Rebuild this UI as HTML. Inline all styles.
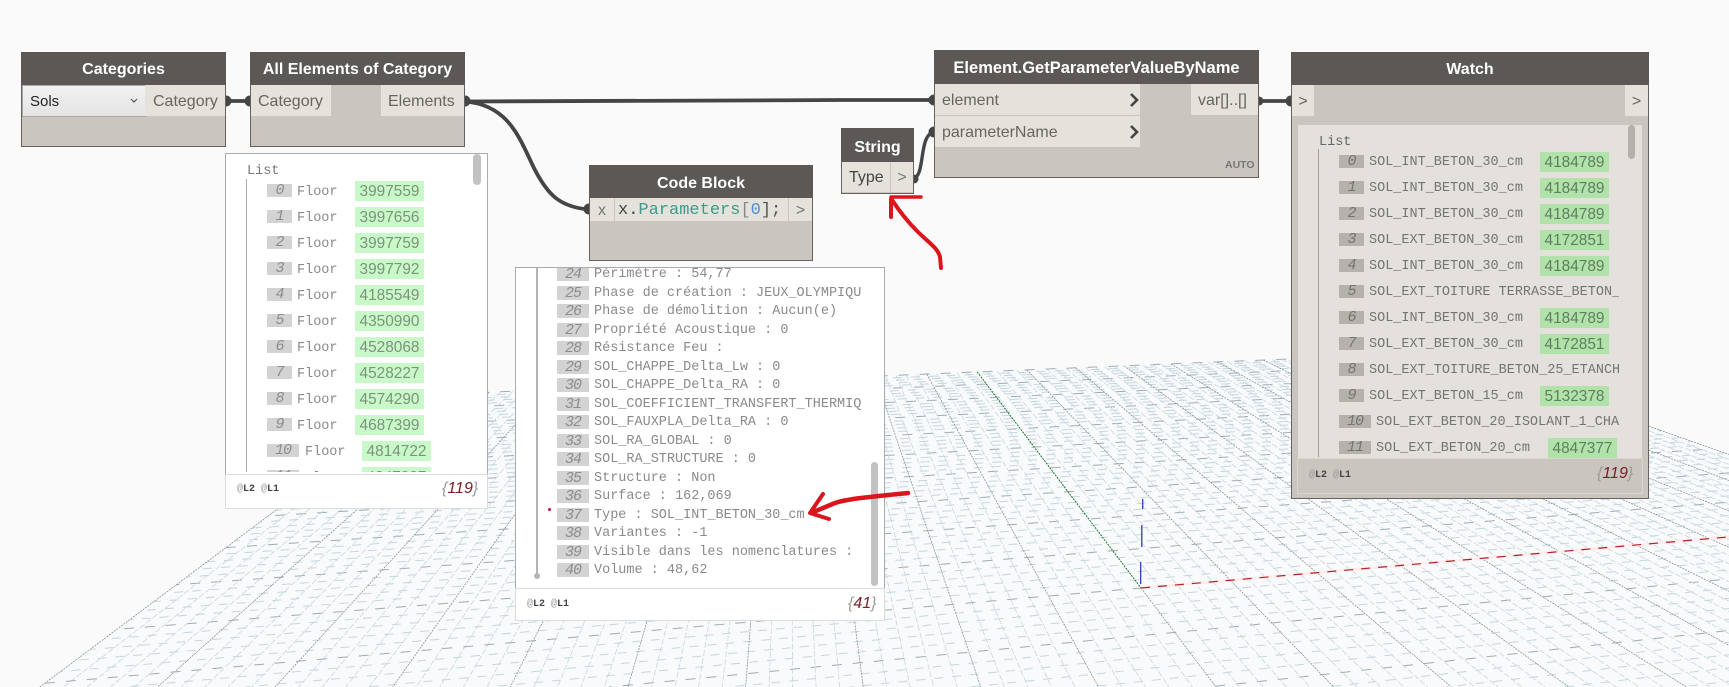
<!DOCTYPE html>
<html><head><meta charset="utf-8"><title>Dynamo</title>
<style>
html,body{margin:0;padding:0;width:1729px;height:687px;overflow:hidden}
body{background:#fafafa;position:relative;font-family:"Liberation Sans",sans-serif}
#wrap{position:absolute;left:0;top:0;width:1729px;height:687px;overflow:hidden}
.a,.r,.r *,.n,.n *{position:absolute;white-space:nowrap}
svg{position:absolute;left:0;top:0}
.n{background:#cac6bf;box-shadow:inset 0 0 0 1px #66625e}
.h{left:0;right:0;top:0;height:33px;background:#5b5855;color:#fff;font:bold 16px/36px "Liberation Sans",sans-serif;text-align:center}
.p{background:#e5e2dc;color:#68655f;font:16px/33px "Liberation Sans",sans-serif}
.clip{position:absolute;left:0;top:0;width:1729px;height:687px}
.r{left:0;height:20px;font:13.5px/20px "Liberation Mono",monospace;color:#8a8a8a}
.r em{top:3px;height:13px;font:italic 15px/14px "Liberation Mono",monospace;letter-spacing:-1px;text-align:center;color:#8c8c8c}
.r b{top:0;width:69px;height:20px;font:15.4px/21px "Liberation Sans",sans-serif;text-align:center}
.r span{top:2px}
.L em{left:267px;width:25px;background:#d3d3d3}.L span{left:297px}.L b{left:355px;background:#c9f9c9;color:#7c937c}
.L.w em{width:32px}.L.w span{left:305px}.L.w b{left:362px}
.W em{left:1339px;width:25px;background:#b5b2ab;color:#76746f}.W span{left:1369px;top:1px;color:#747470}.W b{left:1540px;background:#b0e2aa;color:#5f7f5f}
.W.w em{width:32px}.W.w span{left:1376px}.W.w b{left:1548px}
.P{height:14px;line-height:14px}
.P em{left:557px;top:0;width:32px;height:14px;line-height:15px;background:#d3d3d3}
.P span{left:594px;top:1px}
.foot{font:bold 10px/12px "Liberation Mono",monospace;color:#444}
.foot i{font-style:normal;color:#999;font-weight:normal}
.cnt{font:italic 16px/18px "Liberation Sans",sans-serif;color:#9a9a9a}
.cnt u{text-decoration:none;color:#7a2028}
</style></head><body><div id="wrap">

<svg id="g" width="1729" height="687" viewBox="0 0 1729 687"></svg>

<svg width="1729" height="687" fill="none" stroke="#454545" stroke-width="3.8">
<path d="M226 101H250"/>
<path d="M465 101.5C800 100 800 100 934 100"/>
<path d="M465 101.5C510 105 520 140 535 170C548 195 560 207 589 209.5"/>
<path d="M913 179C926 176 918 135 934 132" stroke-width="3.4"/>
<path d="M1258 101H1291"/>
<g fill="#454545" stroke="none">
<circle cx="226" cy="101" r="5.5"/><circle cx="250" cy="101" r="5.5"/><circle cx="465" cy="101" r="5.5"/><circle cx="589" cy="209" r="5.5"/><circle cx="934" cy="100" r="5.5"/><circle cx="934" cy="132" r="5.5"/><circle cx="914" cy="179" r="4.5"/><circle cx="1259" cy="101" r="4.5"/><circle cx="1291" cy="101" r="5.5"/>
</g></svg>

<!-- Categories -->
<div class="n" style="left:21px;top:52px;width:205px;height:95px">
<div class="h">Categories</div>
<div style="left:1px;top:33px;width:122px;height:30px;background:linear-gradient(#f2f2f2,#e4e4e4);border:1px solid #aaa;box-sizing:content-box;font:15px/31px 'Liberation Sans',sans-serif;color:#222;text-indent:7px">Sols</div>
<svg style="left:0;top:0" width="205" height="95"><path d="M110 47l3 3 3-3" fill="none" stroke="#555" stroke-width="1.2"/></svg>
<div class="p" style="left:124px;top:33px;width:80px;height:31px;text-indent:8px">Category</div>
</div>

<!-- All elements -->
<div class="n" style="left:250px;top:52px;width:215px;height:95px">
<div class="h">All Elements of Category</div>
<div class="p" style="left:1px;top:33px;width:80px;height:31px;text-indent:7px">Category</div>
<div class="p" style="left:131px;top:33px;width:83px;height:31px;text-indent:7px">Elements</div>
</div>

<!-- Code block -->
<div class="n" style="left:589px;top:165px;width:224px;height:96px">
<div class="h" style="line-height:38px">Code Block</div>
<div class="p" style="left:1px;top:33px;width:24px;height:23px;line-height:25px;text-align:center;color:#777">x</div>
<div class="p" style="left:25px;top:33px;width:175px;height:23px;border-left:1px solid #cac6bf;border-right:1px solid #cac6bf;box-sizing:border-box;font:17px/25px 'Liberation Mono',monospace;color:#444;text-indent:3px">x.<span style="position:static;color:#3d9a8c">Parameters</span><span style="position:static;color:#888">[</span><span style="position:static;color:#4a8fd8">0</span><span style="position:static;color:#555">];</span></div>
<div class="p" style="left:200px;top:33px;width:23px;height:23px;line-height:25px;text-align:center;color:#777">&gt;</div>
</div>

<!-- String -->
<div class="n" style="left:841px;top:128px;width:73px;height:66px">
<div class="h" style="height:34px;line-height:40px">String</div>
<div class="p" style="left:1px;top:34px;width:48px;height:30px;line-height:32px;text-indent:7px;color:#444;border-right:1px solid #cac6bf;box-sizing:content-box">Type</div>
<div class="p" style="left:50px;top:34px;width:22px;height:30px;line-height:32px;text-align:center;color:#777">&gt;</div>
</div>

<!-- GetParameterValueByName -->
<div class="n" style="left:934px;top:50px;width:325px;height:128px">
<div class="h" style="height:34px;font-size:16.5px">Element.GetParameterValueByName</div>
<div class="p" style="left:1px;top:34px;width:205px;height:31px;text-indent:7px">element</div>
<div class="p" style="left:1px;top:66px;width:205px;height:31px;text-indent:7px">parameterName</div>
<div class="p" style="left:257px;top:34px;width:67px;height:31px;text-indent:7px">var[]..[]</div>
<div style="left:291px;top:109px;font:bold 10.5px/12px 'Liberation Sans',sans-serif;color:#777">AUTO</div>
<svg style="left:0;top:0" width="325" height="128"><path d="M197 44l6 6-6 6M197 76l6 6-6 6" fill="none" stroke="#444" stroke-width="2.6"/></svg>
</div>

<!-- Watch -->
<div class="n" style="left:1291px;top:52px;width:358px;height:447px">
<div class="h">Watch</div>
<div class="p" style="left:1px;top:33px;width:22px;height:31px;text-align:center">&gt;</div>
<div class="p" style="left:334px;top:33px;width:23px;height:31px;text-align:center">&gt;</div>
<div style="left:7px;top:73px;width:344px;height:333px;background:#e4e1dc"></div>
<div style="left:6px;top:406px;width:344px;height:34px;border:1px solid #d8d5cf"></div>
</div>
<div class="clip" style="clip-path:inset(125px 80px 229px 1298px)">
<div class="a" style="left:1319px;top:134px;font:13.5px/18px 'Liberation Mono',monospace;color:#666">List</div>
<div class="a" style="left:1318px;top:149px;width:1px;height:308px;background:#a5a29c"></div>
<div class="a" style="left:1628px;top:125px;width:7px;height:34px;border-radius:4px;background:#b4b1ab"></div>
</div>
<div class="clip" style="clip-path:inset(125px 110px 229px 1298px)">
<div class="r W" style="top:152px"><em>0</em><span>SOL_INT_BETON_30_cm</span><b>4184789</b></div>
<div class="r W" style="top:178px"><em>1</em><span>SOL_INT_BETON_30_cm</span><b>4184789</b></div>
<div class="r W" style="top:204px"><em>2</em><span>SOL_INT_BETON_30_cm</span><b>4184789</b></div>
<div class="r W" style="top:230px"><em>3</em><span>SOL_EXT_BETON_30_cm</span><b>4172851</b></div>
<div class="r W" style="top:256px"><em>4</em><span>SOL_INT_BETON_30_cm</span><b>4184789</b></div>
<div class="r W" style="top:282px"><em>5</em><span>SOL_EXT_TOITURE TERRASSE_BETON_</span></div>
<div class="r W" style="top:308px"><em>6</em><span>SOL_INT_BETON_30_cm</span><b>4184789</b></div>
<div class="r W" style="top:334px"><em>7</em><span>SOL_EXT_BETON_30_cm</span><b>4172851</b></div>
<div class="r W" style="top:360px"><em>8</em><span>SOL_EXT_TOITURE_BETON_25_ETANCH</span></div>
<div class="r W" style="top:386px"><em>9</em><span>SOL_EXT_BETON_15_cm</span><b>5132378</b></div>
<div class="r W w" style="top:412px"><em>10</em><span>SOL_EXT_BETON_20_ISOLANT_1_CHA</span></div>
<div class="r W w" style="top:438px"><em>11</em><span>SOL_EXT_BETON_20_cm</span><b>4847377</b></div>
</div>
<div class="a foot" style="left:1309px;top:470px"><i>@</i>L2 <i>@</i>L1</div>
<div class="a cnt" style="left:1597px;top:465px">{<u>119</u>}</div>

<!-- Left list -->
<div class="a" style="left:225px;top:153px;width:261px;height:355px;background:#fff;border:1px solid #ababab;border-bottom:none"></div>
<div class="a" style="left:225px;top:474px;width:261px;height:33px;background:#fff;border:1.5px solid #dcdcdc"></div>
<div class="a" style="left:247px;top:163px;font:13.5px/18px 'Liberation Mono',monospace;color:#777">List</div>
<div class="a" style="left:246px;top:179px;width:1px;height:293px;background:#a8a8a8"></div>
<div class="a" style="left:473px;top:154px;width:8px;height:31px;border-radius:4px;background:#c2c2c2"></div>
<div class="clip" style="clip-path:inset(153px 1245px 215px 227px)">
<div class="r L" style="top:181px"><em>0</em><span>Floor</span><b>3997559</b></div>
<div class="r L" style="top:207px"><em>1</em><span>Floor</span><b>3997656</b></div>
<div class="r L" style="top:233px"><em>2</em><span>Floor</span><b>3997759</b></div>
<div class="r L" style="top:259px"><em>3</em><span>Floor</span><b>3997792</b></div>
<div class="r L" style="top:285px"><em>4</em><span>Floor</span><b>4185549</b></div>
<div class="r L" style="top:311px"><em>5</em><span>Floor</span><b>4350990</b></div>
<div class="r L" style="top:337px"><em>6</em><span>Floor</span><b>4528068</b></div>
<div class="r L" style="top:363px"><em>7</em><span>Floor</span><b>4528227</b></div>
<div class="r L" style="top:389px"><em>8</em><span>Floor</span><b>4574290</b></div>
<div class="r L" style="top:415px"><em>9</em><span>Floor</span><b>4687399</b></div>
<div class="r L w" style="top:441px"><em>10</em><span>Floor</span><b>4814722</b></div>
<div class="r L w" style="top:467px"><em>11</em><span>Floor</span><b>4847387</b></div>
</div>
<div class="a foot" style="left:237px;top:484px"><i>@</i>L2 <i>@</i>L1</div>
<div class="a cnt" style="left:442px;top:480px">{<u>119</u>}</div>

<!-- Parameter list -->
<div class="a" style="left:515px;top:267px;width:370px;height:354px;background:#fff;border:1px solid #ababab;border-bottom:none;box-sizing:border-box"></div>
<div class="a" style="left:515px;top:588px;width:370px;height:33px;background:#fff;border:1.5px solid #dcdcdc;box-sizing:border-box"></div>
<div class="a" style="left:536px;top:268px;width:2px;height:308px;background:#b5b5b5"></div>
<div class="a" style="left:534px;top:573px;width:6px;height:6px;border-radius:3px;background:#b5b5b5"></div>
<div class="a" style="left:871px;top:462px;width:7px;height:124px;border-radius:4px;background:#c2c2c2"></div>
<div class="a" style="left:548px;top:508px;width:3px;height:3px;border-radius:2px;background:#c8102e"></div>
<div class="clip" style="clip-path:inset(268px 866px 100px 516px)">
<div class="r P" style="top:267px"><em>24</em><span>Périmètre : 54,77</span></div>
<div class="r P" style="top:285.5px"><em>25</em><span>Phase de création : JEUX_OLYMPIQU</span></div>
<div class="r P" style="top:304px"><em>26</em><span>Phase de démolition : Aucun(e)</span></div>
<div class="r P" style="top:322.5px"><em>27</em><span>Propriété Acoustique : 0</span></div>
<div class="r P" style="top:341px"><em>28</em><span>Résistance Feu :</span></div>
<div class="r P" style="top:359.5px"><em>29</em><span>SOL_CHAPPE_Delta_Lw : 0</span></div>
<div class="r P" style="top:378px"><em>30</em><span>SOL_CHAPPE_Delta_RA : 0</span></div>
<div class="r P" style="top:396.5px"><em>31</em><span>SOL_COEFFICIENT_TRANSFERT_THERMIQ</span></div>
<div class="r P" style="top:415px"><em>32</em><span>SOL_FAUXPLA_Delta_RA : 0</span></div>
<div class="r P" style="top:433.5px"><em>33</em><span>SOL_RA_GLOBAL : 0</span></div>
<div class="r P" style="top:452px"><em>34</em><span>SOL_RA_STRUCTURE : 0</span></div>
<div class="r P" style="top:470.5px"><em>35</em><span>Structure : Non</span></div>
<div class="r P" style="top:489px"><em>36</em><span>Surface : 162,069</span></div>
<div class="r P" style="top:507.5px"><em>37</em><span>Type : SOL_INT_BETON_30_cm</span></div>
<div class="r P" style="top:526px"><em>38</em><span>Variantes : -1</span></div>
<div class="r P" style="top:544.5px"><em>39</em><span>Visible dans les nomenclatures :</span></div>
<div class="r P" style="top:563px"><em>40</em><span>Volume : 48,62</span></div>
</div>
<div class="a foot" style="left:527px;top:599px"><i>@</i>L2 <i>@</i>L1</div>
<div class="a cnt" style="left:848px;top:595px">{<u>41</u>}</div>

<!-- Red annotations -->
<svg width="1729" height="687" fill="none" stroke="#d9161c" stroke-width="4" stroke-linecap="round" stroke-linejoin="round">
<path d="M891 197H921" stroke-width="3.5"/>
<path d="M891 217V199"/>
<path d="M892 200C900 212 908 222 917 231C928 242 938 248 940 257L941 268"/>
<path d="M908 493C880 496 850 498 835 503L811 513" stroke-width="4.5"/>
<path d="M823 494L810 513L829 519"/>
</svg>

<script>
(function(){
var k=.0875,D=[790,125],A=[6069,160],s='',W=1729,H=687;
function X(a,b,c,d){var x1=a[0],y1=a[1],x2=b[0],y2=b[1],x3=c[0],y3=c[1],x4=d[0],y4=d[1];
var q=(x1-x2)*(y3-y4)-(y1-y2)*(x3-x4),e=x1*y2-y1*x2,f=x3*y4-y3*x4;
return [(e*(x3-x4)-(x1-x2)*f)/q,(e*(y3-y4)-(y1-y2)*f)/q];}
function P(u,v){var t=1/(1+k*v);return X(D,[1141+96.9*u,588],A,[790+351*t,125+463*t]);}
function f(p){return p[0].toFixed(1)+' '+p[1].toFixed(1);}
function seg(a,b){var t0=0,t1=1,dx=b[0]-a[0],dy=b[1]-a[1];
var ps=[-dx,dx,-dy,dy],qs=[a[0],W-a[0],a[1],H-a[1]];
for(var n=0;n<4;n++){if(ps[n]==0){if(qs[n]<0)return null;continue;}
var r=qs[n]/ps[n];if(ps[n]<0){if(r>t1)return null;if(r>t0)t0=r;}else{if(r<t0)return null;if(r<t1)t1=r;}}
return 'M'+f([a[0]+t0*dx,a[1]+t0*dy])+'L'+f([a[0]+t1*dx,a[1]+t1*dy]);}
function line(a,b,attr){var d=seg(a,b);if(d)s+='<path fill="none" '+attr+' d="'+d+'"/>';}
var c1=P(-10,10),c2=P(10,10),c3=P(10,-5),c4=P(-10,-5);
var rt=X(c2,c3,[W,0],[W,H]),lb=X(c1,c4,[0,H],[W,H]);
s+='<path fill="#f8fafb" d="M'+f(c1)+'L'+f(c2)+'L'+f(rt)+'L'+W+' '+H+'L'+f(lb)+'Z"/>';
var i,j;
for(j=-25;j<=50;j++){var v=j/5,m=j%5==0;if(j==0)continue;
line(P(-10,v),P(10,v),'stroke="'+(m?'#9fabb2':'#c6d6de')+'" stroke-width="1" stroke-dasharray="'+(m?'10 11':'9 9')+'" stroke-dashoffset="'+(j*7)+'"');}
for(i=-50;i<=50;i++){var u=i/5,m2=i%5==0;if(i==0)continue;
line(P(u,10),P(u,-5),'stroke="'+(m2?'#8a949a':'#c8d7de')+'" stroke-width="'+(m2?.8:.8)+'" stroke-dasharray="'+(m2?'2 1':'6 2')+'"');}
line(P(-10,0),P(0,0),'stroke="#9fabb2" stroke-dasharray="10 11"');
line(P(0,0),P(0,-5),'stroke="#8a949a" stroke-width=".8" stroke-dasharray="2 1"');
line(P(0,10),P(0,0),'stroke="#1f7a2a" stroke-width="1" stroke-dasharray="2 1"');
line(P(0,0),P(10,0),'stroke="#ffecec" stroke-width="3"');
line(P(0,0),P(10,0),'stroke="#b11f2a" stroke-width="1.2" stroke-dasharray="9 8"');
s+='<path fill="none" stroke="#2130b5" stroke-width="1.2" d="M1142.7 499V509M1141.8 525V547M1140.7 562V584"/>';
document.getElementById('g').innerHTML=s;
})();
</script>
</div></body></html>
